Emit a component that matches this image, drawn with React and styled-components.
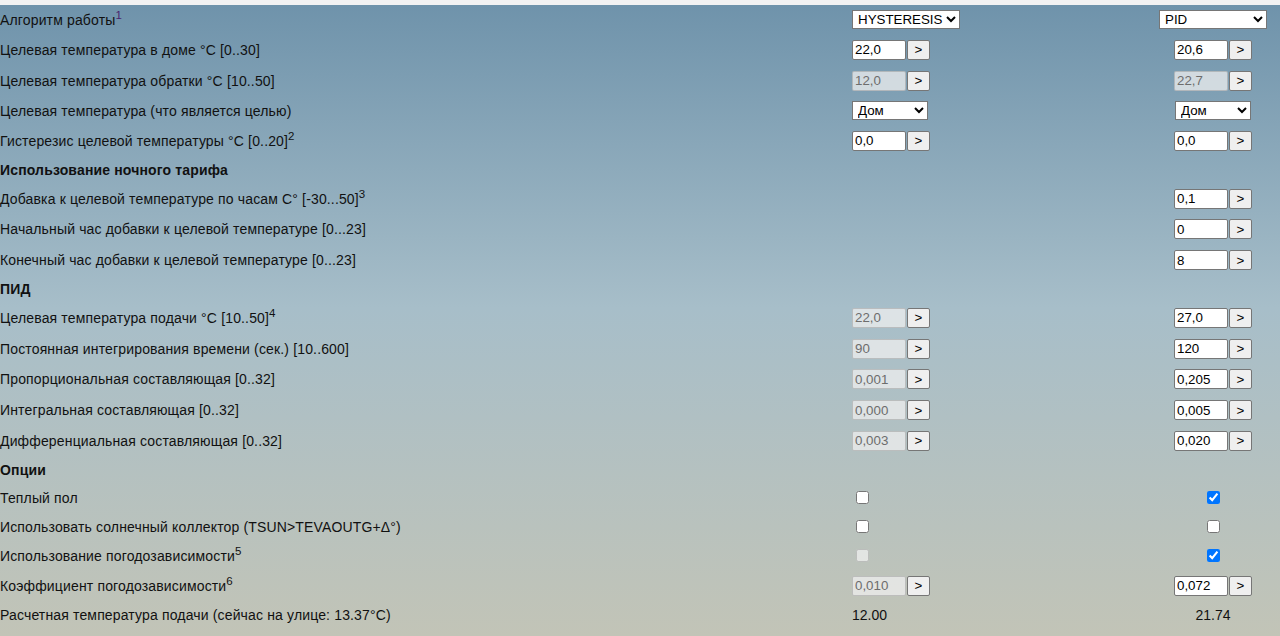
import React from 'react';
import styled, { createGlobalStyle } from 'styled-components';

const GlobalStyle = createGlobalStyle`
  html, body { margin: 0; padding: 0; background: #f2f2f2; }
  body {
    font-family: "Liberation Sans", Arial, sans-serif;
    font-size: 14px;
    color: #111;
  }
`;

const FONT = `"Liberation Sans", Arial, sans-serif`;

const Page = styled.main`
  margin-top: 5px;
  height: 631px;
  overflow: hidden;
  background: linear-gradient(180deg, #6f93ab 0%, #a7bec9 48%, #c2c4b7 100%);
`;

const Table = styled.div`
  display: flex;
  flex-direction: column;
  padding-right: 13px;
`;

const HEIGHTS = { select: 29.5, input: 30.75, header: 27, check: 29, text: 28 };

const Row = styled.div`
  display: grid;
  grid-template-columns: 852px 1fr 108px;
  align-items: center;
  height: ${(p) => HEIGHTS[p.$kind]}px;
`;

const Label = styled.div`
  white-space: nowrap;
  line-height: 16px;
  letter-spacing: 0.15px;
  font-weight: ${(p) => (p.$bold ? 700 : 400)};
`;

const Sup = styled.sup`
  font-size: 11.5px;
  line-height: 0;
  letter-spacing: 0;
  vertical-align: super;
  color: ${(p) => (p.$accent ? '#4a1f6e' : 'inherit')};
`;

const Cell = styled.div`
  display: flex;
  align-items: center;
  justify-content: ${(p) => (p.$center ? 'center' : 'flex-start')};
  gap: 1px;
`;

const NumInput = styled.input`
  box-sizing: border-box;
  width: 54px;
  height: 20px;
  margin: 0;
  padding: 0 2px;
  font: 13.33px ${FONT};
  color: #000;
  background: #fff;
  border: 1px solid #767676;
  border-radius: 2px;
  outline: none;
  &:disabled {
    background: rgba(239, 239, 239, 0.75);
    color: #6d6d6d;
    border-color: rgba(118, 118, 118, 0.35);
  }
`;

const Go = styled.button`
  box-sizing: border-box;
  width: 23px;
  height: 20px;
  margin: 0;
  padding: 0;
  font: 13.33px ${FONT};
  color: #000;
  background: #efefef;
  border: 1px solid #767676;
  border-radius: 2px;
`;

const Select = styled.select`
  box-sizing: border-box;
  width: ${(p) => p.$w}px;
  height: 19px;
  margin: 0;
  padding: 0 0 0 1px;
  font: 13.33px ${FONT};
  color: #000;
  background: #fff;
  border: 1px solid #767676;
  border-radius: 0;
`;

const Check = styled.input.attrs({ type: 'checkbox' })`
  width: 13px;
  height: 13px;
  margin: 3px 3px 3px 4px;
`;

const Value = styled.span`
  font-size: 14px;
  color: #111;
`;

const rows = [
  { kind: 'select', label: 'Алгоритм работы', sup: '1', accent: true,
    a: { t: 'select', v: 'HYSTERESIS', opts: ['HYSTERESIS', 'PID'], w: 108 },
    b: { t: 'select', v: 'PID', opts: ['HYSTERESIS', 'PID'], w: 108 } },
  { kind: 'input', label: 'Целевая температура в доме °C [0..30]',
    a: { t: 'num', v: '22,0' }, b: { t: 'num', v: '20,6' } },
  { kind: 'input', label: 'Целевая температура обратки °C [10..50]',
    a: { t: 'num', v: '12,0', d: true }, b: { t: 'num', v: '22,7', d: true } },
  { kind: 'select', label: 'Целевая температура (что является целью)',
    a: { t: 'select', v: 'Дом', opts: ['Дом', 'Обратка'], w: 76 },
    b: { t: 'select', v: 'Дом', opts: ['Дом', 'Обратка'], w: 76 } },
  { kind: 'input', label: 'Гистерезис целевой температуры °C [0..20]', sup: '2',
    a: { t: 'num', v: '0,0' }, b: { t: 'num', v: '0,0' } },
  { kind: 'header', label: 'Использование ночного тарифа' },
  { kind: 'input', label: 'Добавка к целевой температуре по часам C° [-30...50]', sup: '3',
    b: { t: 'num', v: '0,1' } },
  { kind: 'input', label: 'Начальный час добавки к целевой температуре [0...23]',
    b: { t: 'num', v: '0' } },
  { kind: 'input', label: 'Конечный час добавки к целевой температуре [0...23]',
    b: { t: 'num', v: '8' } },
  { kind: 'header', label: 'ПИД' },
  { kind: 'input', label: 'Целевая температура подачи °C [10..50]', sup: '4',
    a: { t: 'num', v: '22,0', d: true }, b: { t: 'num', v: '27,0' } },
  { kind: 'input', label: 'Постоянная интегрирования времени (сек.) [10..600]',
    a: { t: 'num', v: '90', d: true }, b: { t: 'num', v: '120' } },
  { kind: 'input', label: 'Пропорциональная составляющая [0..32]',
    a: { t: 'num', v: '0,001', d: true }, b: { t: 'num', v: '0,205' } },
  { kind: 'input', label: 'Интегральная составляющая [0..32]',
    a: { t: 'num', v: '0,000', d: true }, b: { t: 'num', v: '0,005' } },
  { kind: 'input', label: 'Дифференциальная составляющая [0..32]',
    a: { t: 'num', v: '0,003', d: true }, b: { t: 'num', v: '0,020' } },
  { kind: 'header', label: 'Опции' },
  { kind: 'check', label: 'Теплый пол',
    a: { t: 'check', v: false }, b: { t: 'check', v: true } },
  { kind: 'check', label: 'Использовать солнечный коллектор (TSUN>TEVAOUTG+Δ°)',
    a: { t: 'check', v: false }, b: { t: 'check', v: false } },
  { kind: 'check', label: 'Использование погодозависимости', sup: '5',
    a: { t: 'check', v: false, d: true }, b: { t: 'check', v: true } },
  { kind: 'input', label: 'Коэффициент погодозависимости', sup: '6',
    a: { t: 'num', v: '0,010', d: true }, b: { t: 'num', v: '0,072' } },
  { kind: 'text', label: 'Расчетная температура подачи (сейчас на улице: 13.37°C)',
    a: { t: 'text', v: '12.00' }, b: { t: 'text', v: '21.74' } },
];

function Control({ c }) {
  if (!c) return null;
  if (c.t === 'select') {
    return (
      <Select $w={c.w} defaultValue={c.v}>
        {c.opts.map((o) => (
          <option key={o} value={o}>{o}</option>
        ))}
      </Select>
    );
  }
  if (c.t === 'num') {
    return (
      <>
        <NumInput type="text" defaultValue={c.v} disabled={c.d} />
        <Go type="button">&gt;</Go>
      </>
    );
  }
  if (c.t === 'check') {
    return <Check defaultChecked={c.v} disabled={c.d} />;
  }
  return <Value>{c.v}</Value>;
}

export default function App() {
  return (
    <>
      <GlobalStyle />
      <Page>
        <Table>
          {rows.map((r, i) => (
            <Row key={i} $kind={r.kind}>
              <Label $bold={r.kind === 'header'}>
                {r.label}
                {r.sup && <Sup $accent={r.accent}>{r.sup}</Sup>}
              </Label>
              <Cell>
                <Control c={r.a} />
              </Cell>
              <Cell $center>
                <Control c={r.b} />
              </Cell>
            </Row>
          ))}
        </Table>
      </Page>
    </>
  );
}
